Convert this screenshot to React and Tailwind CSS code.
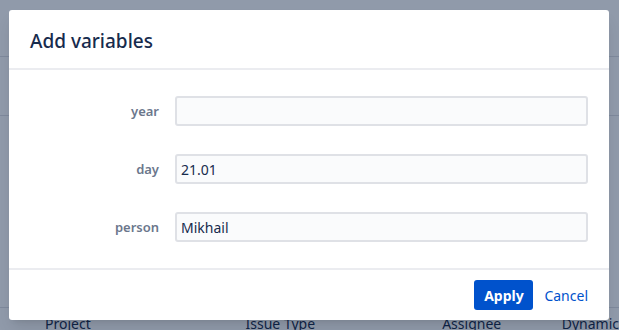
import React, { useState } from 'react';

const FIELDS = [
  { name: 'year', value: '' },
  { name: 'day', value: '21.01' },
  { name: 'person', value: 'Mikhail' },
];

const FONT = { fontFamily: '"Segoe UI", "Noto Sans", "Open Sans", sans-serif' };

const VariableRow = ({ name, value, onChange }) => (
  <div className="flex items-center">
    <label className="w-[166px] shrink-0 pr-4 pt-[2px] text-right text-[13px] font-semibold text-[#6b778c]">{name}</label>
    <input
      value={value}
      onChange={e => onChange(name, e.target.value)}
      className="h-[30px] min-w-0 flex-1 rounded-[3px] border-2 border-[#dfe1e6] bg-[#fafbfc] px-[4px] text-[14px] text-[#172b4d] outline-none"
    />
  </div>
);

export default function App() {
  const [vars, setVars] = useState(() => Object.fromEntries(FIELDS.map(f => [f.name, f.value])));
  const update = (name, v) => setVars(prev => ({ ...prev, [name]: v }));

  return (
    <div className="relative h-[330px] w-[619px] overflow-hidden bg-white" style={FONT}>
      {/* page behind the modal */}
      <div className="flex h-full flex-col">
        <div className="h-[57px] border-b border-[#dfe1e6]" />
        <div className="h-[59px] border-b border-[#dfe1e6]" />
        <div className="flex-1 border-b border-[#dfe1e6]" />
        <div className="flex h-[22px] pt-[5px] text-[14px] text-[#172b4d]">
          <span className="ml-[45px] w-[203px]">Project</span>
          <span className="w-[199px]">Issue Type</span>
          <span className="w-[121px]">Assignee</span>
          <span>Dynamic</span>
        </div>
      </div>

      {/* blanket + dialog */}
      <div className="absolute inset-0 bg-[#091e42]/45">
        <div className="ml-[9px] mt-[10px] flex h-[310px] w-[600px] flex-col rounded-[3px] bg-white shadow-lg">
          <div className="flex h-[60px] items-center border-b-2 border-[#ebecf0] px-[21px] pt-[4px]">
            <h1 className="text-[19px] font-medium text-[#172b4d]">Add variables</h1>
          </div>
          <div className="flex flex-1 flex-col gap-[28px] pb-[24px] pr-[21px] pt-[26px]">
            {FIELDS.map(f => (
              <VariableRow key={f.name} name={f.name} value={vars[f.name]} onChange={update} />
            ))}
          </div>
          <div className="flex h-[52px] items-center justify-end gap-[11px] border-t-2 border-[#ebecf0] pr-[21px]">
            <button className="h-[30px] w-[59px] rounded-[3px] bg-[#0052cc] text-[14px] font-bold text-white">Apply</button>
            <button className="text-[14px] text-[#0052cc]">Cancel</button>
          </div>
        </div>
      </div>
    </div>
  );
}
